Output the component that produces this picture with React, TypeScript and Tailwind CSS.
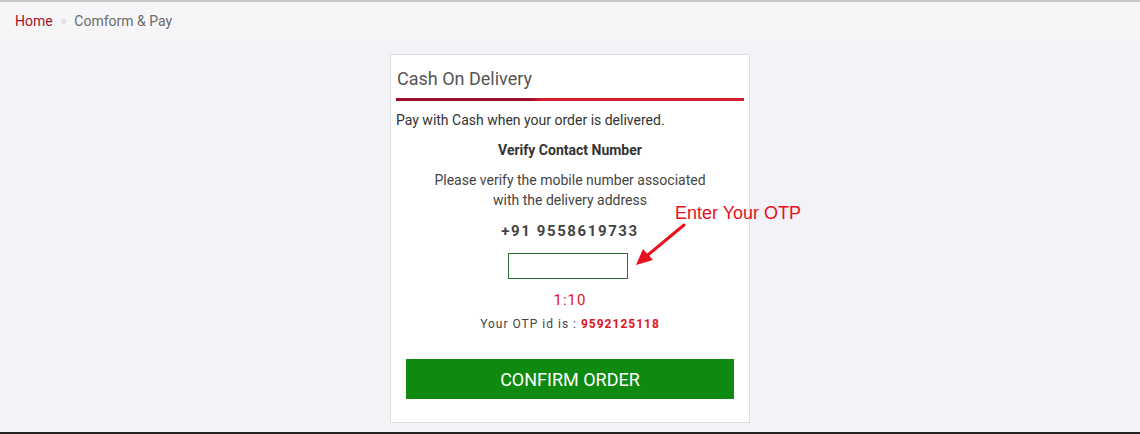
export default function App() {
  return (
    <div className="w-[1140px] h-[434px] flex flex-col bg-[#f2f2f7] font-['Roboto',sans-serif] text-[#333]">
      <div className="h-[2px] bg-[#c6c6c8]" />
      <div className="h-[38px] bg-[#f6f6f8] flex items-center px-[15px] text-[14px]">
        <span className="text-[#a3112b]">Home</span>
        <span className="mx-[8px] text-[#cfcfcf] text-[12px]">»</span>
        <span className="text-[#6b6b6b]">Comform &amp; Pay</span>
      </div>

      <div className="flex-1 flex justify-center pt-[14px]">
        <div className="relative w-[360px] h-[369px] bg-white border border-[#dedede] px-[5px] pt-[12px]">
          <h2 className="text-[18px] leading-[24px] text-[#555] pl-[1px]">Cash On Delivery</h2>
          <div className="mt-[7px] h-[3px] bg-[linear-gradient(to_right,#9b0e2a_0,#9b0e2a_38%,#d81a30_42%,#d81a30_100%)]" />

          <p className="mt-[9px] text-[14px] leading-[20px]">Pay with Cash when your order is delivered.</p>
          <p className="mt-[10px] text-[14px] leading-[20px] font-bold text-center">Verify Contact Number</p>
          <p className="mt-[10px] text-[14px] leading-[20px] text-center text-[#444]">
            Please verify the mobile number associated
            <br />
            with the delivery address
          </p>
          <p className="mt-[11px] text-[15px] leading-[20px] font-bold text-center tracking-[1.6px] text-[#444]">+91 9558619733</p>
          <div className="mt-[12px] flex justify-center pr-[4px]">
            <input type="text" className="w-[120px] h-[26px] border border-[#2c6b2c] outline-none" />
          </div>
          <p className="mt-[11px] text-[15px] leading-[20px] text-center text-[#e0141e] tracking-[1px]">1:10</p>
          <p className="mt-[6px] text-[12px] leading-[16px] text-center tracking-[1px] text-[#444]">
            Your OTP id is : <span className="font-bold text-[#e0141e]">9592125118</span>
          </p>
          <div className="mt-[27px] px-[10px]">
            <button className="w-full h-[40px] bg-[#0f8a10] text-white text-[18px] uppercase">Confirm Order</button>
          </div>

          <div className="absolute left-[284px] top-[147px] whitespace-nowrap font-['Liberation_Sans',Arial,sans-serif] text-[18px] leading-[22px] text-[#e8101c]">
            Enter Your OTP
          </div>
          <svg className="absolute left-[240px] top-[164px]" width="60" height="50" viewBox="0 0 60 50">
            <line x1="53" y1="6" x2="12" y2="40" stroke="#e8101c" strokeWidth="3" strokeLinecap="round" />
            <polygon points="5,46 12,30 22,41" fill="#e8101c" />
          </svg>
        </div>
      </div>

      <div className="mt-[9px] h-[2px] bg-[#222]" />
    </div>
  );
}
